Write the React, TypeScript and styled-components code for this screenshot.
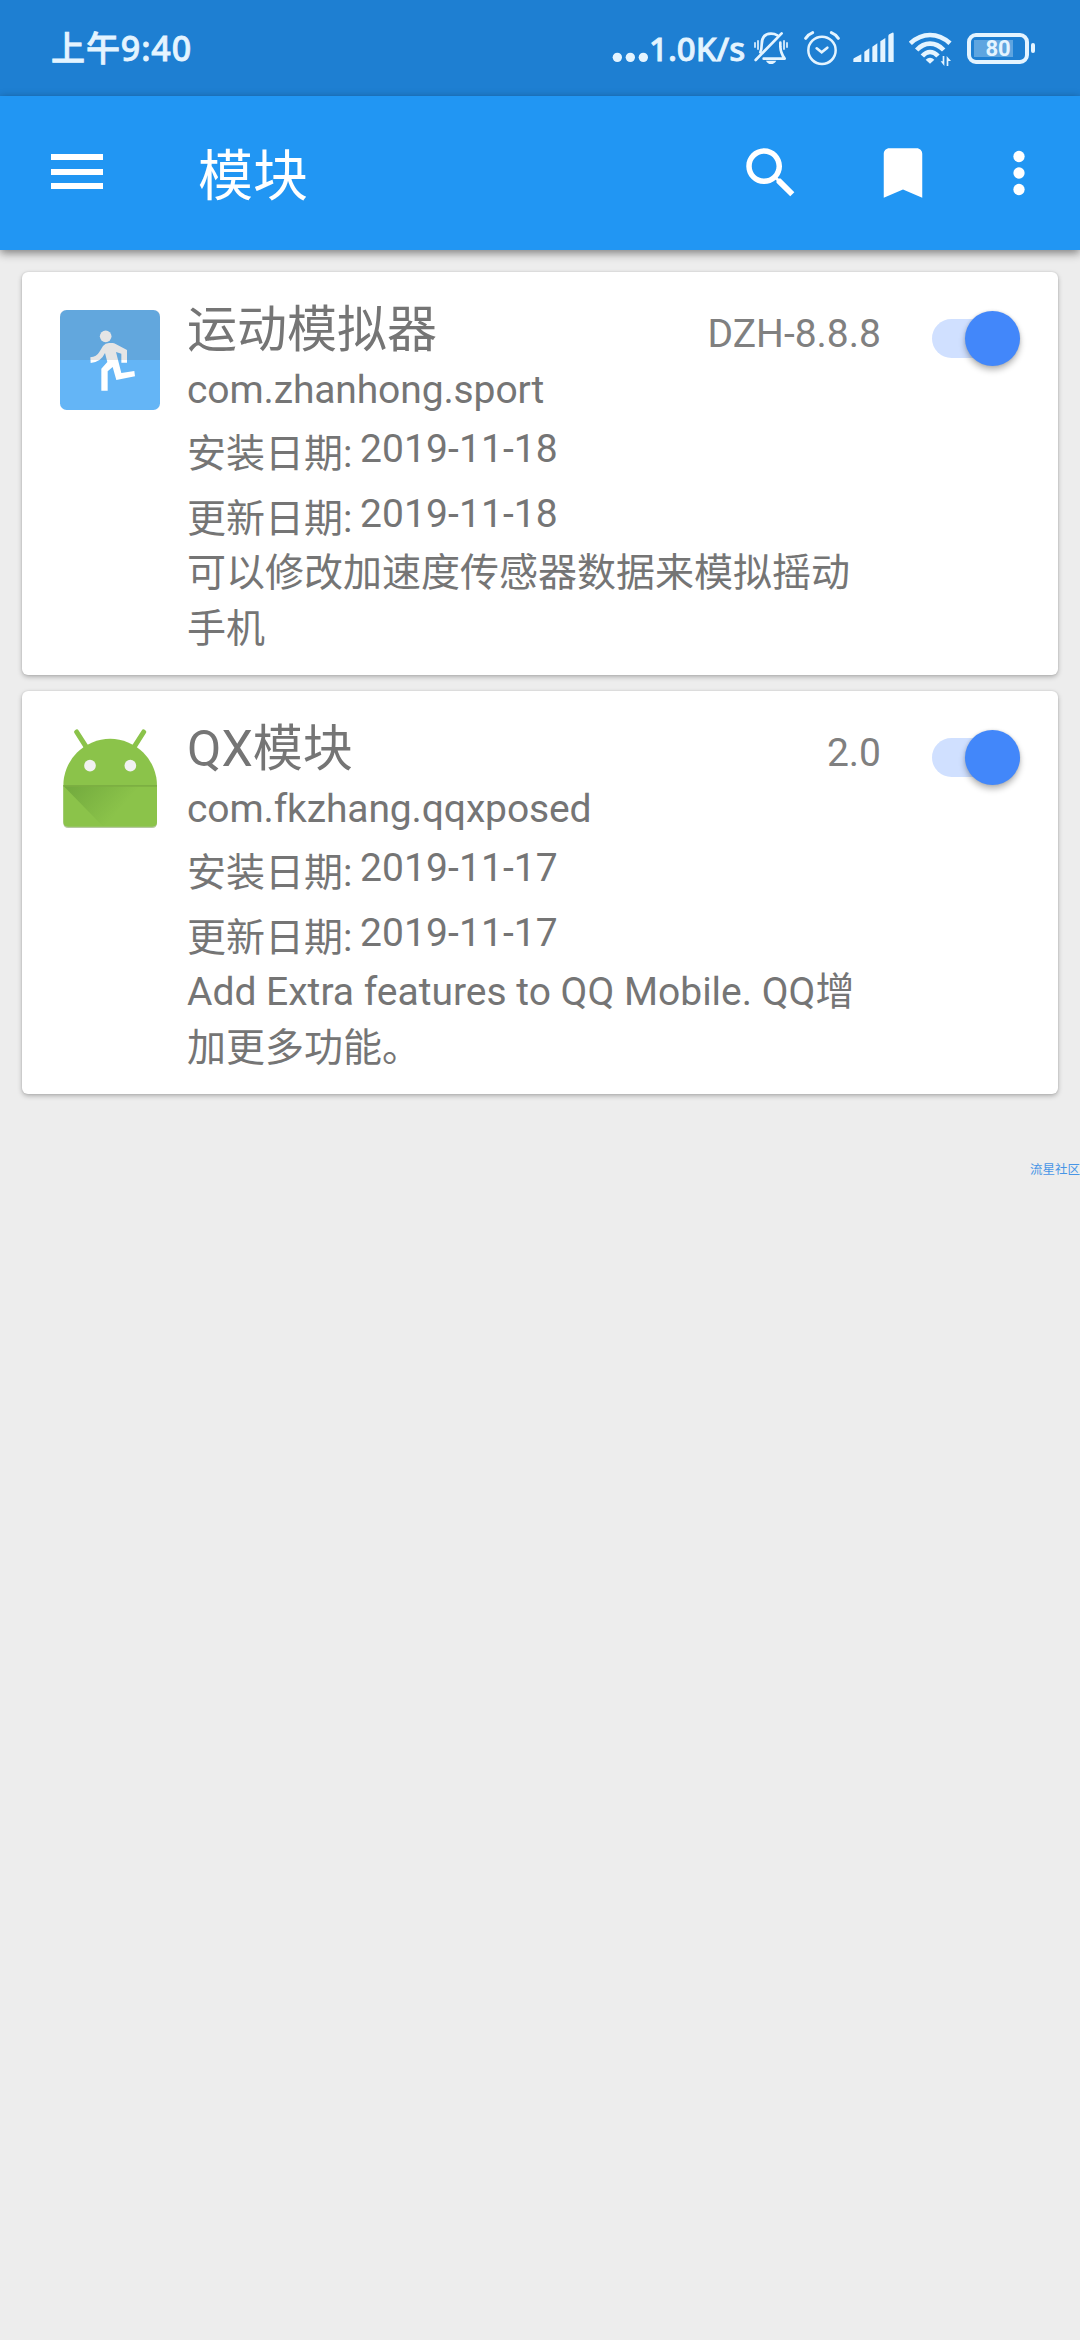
import React from 'react';
import styled, { createGlobalStyle } from 'styled-components';

const GlobalStyle = createGlobalStyle`
  * { box-sizing: border-box; }
  html, body { margin: 0; padding: 0; background: #ededed; }
  body {
    font-family: Roboto, "Noto Sans CJK SC", sans-serif;
    color: #757575;
  }
`;

const statusInk = '#e4f4ff';

const Screen = styled.div`
  width: 1080px;
  height: 2340px;
  display: flex;
  flex-direction: column;
  overflow: hidden;
  background: #ededed;
`;

const StatusBar = styled.header`
  height: 96px;
  flex: none;
  display: flex;
  justify-content: space-between;
  padding: 0 45px 0 51px;
  background: #1e7fd2;
  color: ${statusInk};
  font-family: "Noto Sans", "Noto Sans CJK SC", sans-serif;
  font-weight: 500;
`;

const Clock = styled.div`
  font-size: 34px;
  line-height: 96px;
  letter-spacing: 0.9px;
  -webkit-text-stroke: 0.8px ${statusInk};
`;

const StatusIcons = styled.div`
  display: flex;
  align-items: center;
`;

const NetSpeed = styled.span`
  width: 104px;
  font-size: 33px;
  line-height: 97px;
  white-space: nowrap;
  -webkit-text-stroke: 0.8px ${statusInk};
`;

const StatusGlyph = styled.svg<{ $w: number; $gap: number }>`
  flex: none;
  width: ${(p) => p.$w}px;
  height: 96px;
  margin-right: ${(p) => p.$gap}px;
  fill: ${statusInk};
`;

const Battery = styled.div`
  display: flex;
  align-items: center;
  gap: 2px;
`;

const BatteryCell = styled.div`
  width: 62px;
  height: 31px;
  border: 4px solid ${statusInk};
  border-radius: 9px;
  background: linear-gradient(#5ea5e0, #5ea5e0) 3px 3px / 39px 17px no-repeat;
  font: 700 22px/24px Roboto, sans-serif;
  text-align: center;
`;

const BatteryTip = styled.div`
  width: 4px;
  height: 10px;
  border-radius: 2px;
  background: ${statusInk};
`;

const Toolbar = styled.nav`
  height: 154px;
  flex: none;
  display: flex;
  align-items: center;
  padding: 0 28px 0 51px;
  background: #2196f3;
  color: #fff;
  z-index: 1;
  box-shadow: 0 3px 9px rgba(0, 0, 0, 0.48);
`;

const MenuButton = styled.button`
  width: 52px;
  height: 35px;
  padding: 0;
  margin: 0 95px 3px 0;
  border: 0;
  background: none;
  display: flex;
  flex-direction: column;
  justify-content: space-between;
`;

const MenuLine = styled.span`
  height: 6px;
  width: 52px;
  background: #fff;
`;

const Title = styled.h1`
  margin: 0;
  flex: 1;
  padding-top: 7px;
  font-size: 55px;
  font-weight: 400;
  line-height: 147px;
`;

const Action = styled.svg<{ $gap: number }>`
  width: 66px;
  height: 66px;
  margin-right: ${(p) => p.$gap}px;
  fill: #fff;
`;

const ModuleList = styled.main`
  display: flex;
  flex-direction: column;
  gap: 16px;
  padding: 22px 22px 0;
`;

const Card = styled.article`
  height: 403px;
  display: flex;
  padding: 0 38px;
  border-radius: 6px;
  background: #fff;
  box-shadow: 0 2px 5px rgba(0, 0, 0, 0.26), 0 0 2px rgba(0, 0, 0, 0.12);
`;

const AppIcon = styled.svg`
  flex: none;
  width: 100px;
  height: 100px;
  margin: 38px 27px 0 0;
`;

const Info = styled.div`
  flex: 1;
  padding-top: 26px;
  font-size: 39px;
`;

const Heading = styled.div`
  display: flex;
  justify-content: space-between;
  width: 694px;
  height: 64px;
  line-height: 64px;
`;

const Name = styled.h2`
  margin: 0;
  font-size: 50px;
  font-weight: 400;
`;

const Version = styled.span`
  color: #808080;
  line-height: 72px;
`;

const Package = styled.div`
  line-height: 56px;
  letter-spacing: -0.12px;
`;

const DateRow = styled.div`
  display: flex;
  gap: 7.5px;
  height: 65px;
`;

const DateLabel = styled.span`
  line-height: 72px;
`;

const DateValue = styled.span`
  line-height: 62px;
  letter-spacing: 0.1px;
`;

const Description = styled.p`
  margin: -3px 0 0;
  width: 680px;
  line-height: 56px;
`;

const Toggle = styled.div`
  flex: none;
  width: 88px;
  height: 39px;
  margin-top: 47px;
  display: flex;
  align-items: center;
  justify-content: flex-end;
  border-radius: 20px;
  background: #d0e0ff;
`;

const Thumb = styled.div`
  flex: none;
  width: 55px;
  height: 55px;
  border-radius: 50%;
  background: #4287fa;
  box-shadow: 0 4px 6px rgba(0, 0, 0, 0.28), 0 0 3px rgba(0, 0, 0, 0.12);
`;

const Side = styled.div`
  flex: none;
  width: 88px;
`;

const Watermark = styled.div`
  align-self: flex-end;
  margin-top: 67px;
  white-space: nowrap;
  font-size: 12.5px;
  line-height: 18px;
  color: #4795e6;
`;

const RunnerIcon = () => (
  <AppIcon viewBox="180 150 300 300">
    <rect x="180" y="150" width="300" height="300" rx="20" fill="#64b5f6" />
    <g fill="#fff">
      <circle cx="317" cy="229" r="17.5" />
      <path d="M271 292 Q290 290 298 276 L309 258 Q316 249 327 249 L338 249 Q342 249 347 252 L381 270 V308 H364 V281 L348 276 L355 304 L364 339 L403 333 L405 349 L349 360 L338 321 L323 334 V392 H304 V326 L322 306 L315 279 Q303 306 272 309Z" />
    </g>
    <path d="M180 300 V170 Q180 150 200 150 H460 Q480 150 480 170 V300Z" fill="#5b5b5b" fillOpacity="0.16" />
  </AppIcon>
);

const RobotIcon = () => (
  <AppIcon viewBox="180 267 300 300">
    <defs>
      <linearGradient id="fold" gradientUnits="userSpaceOnUse" x1="190" y1="437" x2="320" y2="553">
        <stop offset="0" stopColor="#33691e" stopOpacity="0.3" />
        <stop offset="1" stopColor="#33691e" stopOpacity="0" />
      </linearGradient>
    </defs>
    <path d="M190 440 V549 Q190 564 205 564 H456 Q471 564 471 549 V440Z" fill="#b5c8a0" />
    <path d="M230 276 L258 320 M431 276 L403 320" stroke="#8bc34a" strokeWidth="15" strokeLinecap="round" />
    <path d="M190 437 A140.5 140.5 0 0 1 471 437 V546 Q471 560 457 560 H204 Q190 560 190 546Z" fill="#8bc34a" />
    <path d="M190 437 H460 V560 H310Z" fill="url(#fold)" />
    <path d="M190 435 H471 V440 H190Z" fill="#7caf42" />
    <circle cx="270" cy="377" r="17.5" fill="#f1f1f1" />
    <circle cx="391" cy="377" r="17.5" fill="#f1f1f1" />
  </AppIcon>
);

interface ModuleInfo {
  name: string;
  version: string;
  pkg: string;
  installed: string;
  updated: string;
  description: string;
  icon: React.ReactNode;
}

const modules: ModuleInfo[] = [
  {
    name: '运动模拟器',
    version: 'DZH-8.8.8',
    pkg: 'com.zhanhong.sport',
    installed: '2019-11-18',
    updated: '2019-11-18',
    description: '可以修改加速度传感器数据来模拟摇动手机',
    icon: <RunnerIcon />,
  },
  {
    name: 'QX模块',
    version: '2.0',
    pkg: 'com.fkzhang.qqxposed',
    installed: '2019-11-17',
    updated: '2019-11-17',
    description: 'Add Extra features to QQ Mobile. QQ增加更多功能。',
    icon: <RobotIcon />,
  },
];

const ModuleCard = ({ module }: { module: ModuleInfo }) => (
  <Card>
    {module.icon}
    <Info>
      <Heading>
        <Name>{module.name}</Name>
        <Version>{module.version}</Version>
      </Heading>
      <Package>{module.pkg}</Package>
      <DateRow>
        <DateLabel>安装日期:</DateLabel>
        <DateValue>{module.installed}</DateValue>
      </DateRow>
      <DateRow>
        <DateLabel>更新日期:</DateLabel>
        <DateValue>{module.updated}</DateValue>
      </DateRow>
      <Description>{module.description}</Description>
    </Info>
    <Side>
      <Toggle role="switch" aria-checked="true">
        <Thumb />
      </Toggle>
    </Side>
  </Card>
);

export default function App() {
  return (
    <Screen>
      <GlobalStyle />
      <StatusBar>
        <Clock>上午9:40</Clock>
        <StatusIcons>
          <StatusGlyph $w={37} $gap={0} viewBox="66 0 111 288">
            <circle cx="82" cy="172" r="14" />
            <circle cx="121" cy="172" r="14" />
            <circle cx="160" cy="172" r="14" />
          </StatusGlyph>
          <NetSpeed>1.0K/s</NetSpeed>
          <StatusGlyph $w={36} $gap={15} viewBox="489 0 108 288">
            <g fill="none" stroke={statusInk} strokeWidth="8" strokeLinecap="round">
              <path d="M497 180 L575 100" />
              <path d="M511 157 Q515 148 515 134 Q515 101 543 101 Q554 101 562 106" />
              <path d="M571 128 V140 Q572 160 584 176 H521" strokeLinejoin="round" />
            </g>
            <path d="M495 127 V143 M504 121 V149 M582 121 V149 M591 127 V143" stroke={statusInk} strokeWidth="5" />
            <path d="M528 182 H559 Q553 192 543 192 Q533 192 528 182Z" />
          </StatusGlyph>
          <StatusGlyph $w={36} $gap={13} viewBox="642 0 108 288">
            <g fill="none" stroke={statusInk} strokeWidth="7.5" strokeLinecap="round">
              <circle cx="696" cy="151" r="41" />
              <path d="M680 145 L695 157 L712 143" strokeWidth="8" />
              <path d="M647 115 Q655 103 668 98 M724 98 Q737 103 745 115" strokeWidth="9" />
            </g>
          </StatusGlyph>
          <StatusGlyph $w={41} $gap={15} viewBox="68 0 123 288">
            <path d="M69 186 V178 Q69 175 72 174 L93 163 V186Z M102 186 V155 L117 145 V186Z M126 186 V140 L141 130 V186Z M150 186 V124 L165 114 V186Z M174 186 V108 Q174 104 178 102 L186 98 Q190 97 190 101 V186Z" />
          </StatusGlyph>
          <StatusGlyph $w={43} $gap={15} viewBox="237 0 129 288">
            <g fill="none" stroke={statusInk} strokeWidth="14">
              <path d="M241 130 Q268 105 300 105 Q333 105 360 130" />
              <path d="M260 150 Q278 131 300 131 Q323 131 341 150" />
              <path d="M277 168 Q288 156 300 156 Q313 156 324 168" />
            </g>
            <path d="M287 179 Q300 167 313 179 L300 191Z" />
            <path d="M338 168 H343 V198 L332 184 H338Z M350 198 V168 L363 183 H355 V198Z" />
          </StatusGlyph>
          <Battery>
            <BatteryCell>80</BatteryCell>
            <BatteryTip />
          </Battery>
        </StatusIcons>
      </StatusBar>
      <Toolbar>
        <MenuButton aria-label="menu">
          <MenuLine />
          <MenuLine />
          <MenuLine />
        </MenuButton>
        <Title>模块</Title>
        <Action $gap={66} viewBox="0 0 24 24">
          <path d="M15.5 14h-.79l-.28-.27C15.41 12.59 16 11.11 16 9.5 16 5.91 13.09 3 9.5 3S3 5.91 3 9.5 5.91 16 9.5 16c1.61 0 3.09-.59 4.23-1.57l.27.28v.79l5 4.99L20.49 19l-4.99-5zm-6 0C7.01 14 5 11.99 5 9.5S7.01 5 9.5 5 14 7.01 14 9.5 11.99 14 9.5 14z" />
        </Action>
        <Action $gap={50} viewBox="0 0 24 24">
          <path d="M17 3H7c-1.1 0-2 .9-2 2v16l7-3 7 3V5c0-1.1-.9-2-2-2z" />
        </Action>
        <Action $gap={0} viewBox="0 0 24 24">
          <circle cx="12" cy="6" r="2.05" />
          <circle cx="12" cy="12" r="2.05" />
          <circle cx="12" cy="18" r="2.05" />
        </Action>
      </Toolbar>
      <ModuleList>
        {modules.map((m) => (
          <ModuleCard key={m.pkg} module={m} />
        ))}
      </ModuleList>
      <Watermark>流星社区</Watermark>
    </Screen>
  );
}
